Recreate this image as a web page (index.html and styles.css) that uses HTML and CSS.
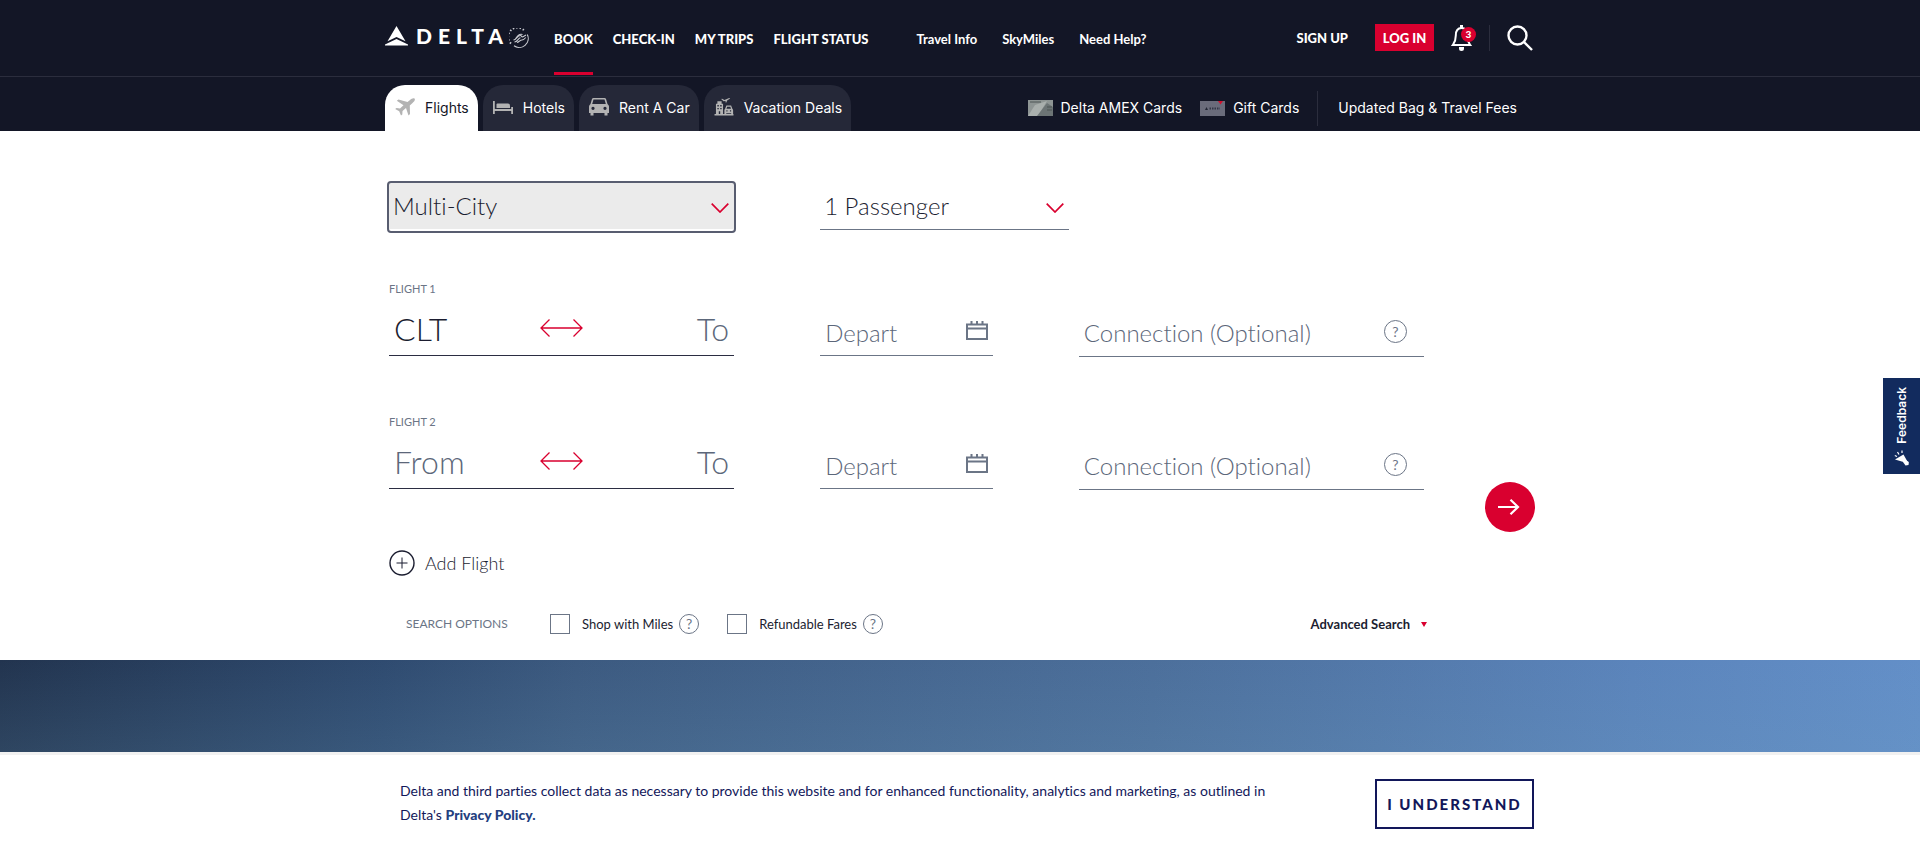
FILE: index.html
```html
<!DOCTYPE html>
<html lang="en">
<head>
<meta charset="utf-8">
<meta name="viewport" content="width=device-width, initial-scale=1">
<title>Delta Air Lines</title>
<link rel="stylesheet" href="styles.css">
</head>
<body>
<svg class="sprite" aria-hidden="true">
  <symbol id="i-swap" viewBox="0 0 43 18"><path d="M1 9H42M9.500 .5 1 9l8.500 8.500M33.500 .5 42 9l-8.500 8.500" fill="none" stroke="currentColor" stroke-width="1.300"/></symbol>
  <symbol id="i-cal" viewBox="0 0 22 19"><path d="M1 3.500H21V18H1ZM1 7.500H21" fill="none" stroke="currentColor" stroke-width="2"/><path d="M5.500 0V4M11 0V4M16.500 0V4" fill="none" stroke="currentColor" stroke-width="2"/></symbol>
  <symbol id="i-chev" viewBox="0 0 18 10"><path d="M.7 .7 9 9 17.300 .7" fill="none" stroke="currentColor" stroke-width="1.700"/></symbol>
</svg>
<header class="header">
  <div class="wrap topbar">
    <a class="logo" href="#" aria-label="Delta home">
      <svg class="logo-mark" viewBox="0 0 23 20" fill="#fff"><path d="M11.500 0 20.500 15.300 11.500 11 2.500 15.300Z"/><path d="M11.500 13 23 18.600V19.500H0V18.600Z"/></svg>
      <span class="logo-word">DELTA</span>
      <svg class="skyteam" viewBox="0 0 20 20" fill="none" stroke="#c9cad0"><path d="M18.300 6.500A9 9 0 0 1 5 17.800" stroke-width="1.100"/><path d="M2 15.500A9 9 0 0 1 15 2.300" stroke-width="1.800" stroke-dasharray="1.500 1.900"/><path d="M4.500 12c3-.2 3.500-4.500 7-4.500 1.500 0 .5 2 2.500 1.300L17 7M5.500 14c3.500-.3 3.500-4.200 6-4.200M8 14.500c2-.5 3-2.500 5-2.500 1.500 0 2.500-1 3.800-2.500M6.500 11c2-3 3.500-5.500 7-4.500" stroke-width="1.100"/></svg>
    </a>
    <nav class="nav-main" aria-label="Main">
      <a class="active" href="#">BOOK</a><a href="#">CHECK-IN</a><a href="#">MY TRIPS</a><a href="#">FLIGHT STATUS</a>
    </nav>
    <nav class="nav-sub" aria-label="Secondary">
      <a href="#">Travel Info</a><a href="#">SkyMiles</a><a href="#">Need Help?</a>
    </nav>
    <div class="account">
      <a class="signup" href="#">SIGN UP</a>
      <button class="login" type="button">LOG IN</button>
      <button class="bell" type="button" aria-label="Notifications">
        <svg viewBox="0 0 21 26" fill="none" stroke="#fff" stroke-width="2"><path d="M10.500 3C6 3 4.800 6.500 4.800 10.500c0 5.500-1.300 7-3 9.500h17.400c-1.700-2.500-3-4-3-9.500C16.200 6.500 15 3 10.500 3Z"/><path d="M10.500 0V3" stroke-width="3"/><path d="M8 22h5v1.500a2.500 2.500 0 0 1-5 0Z" fill="#fff" stroke="none"/></svg>
        <span class="badge">3</span>
      </button>
      <button class="search" type="button" aria-label="Search">
        <svg viewBox="0 0 26 26" fill="none" stroke="#fff" stroke-width="2.400"><circle cx="10.500" cy="10.500" r="9"/><path d="M17 17 25 25"/></svg>
      </button>
    </div>
  </div>
  <div class="subbar">
    <div class="wrap subbar-in">
      <nav class="tabs" aria-label="Booking">
        <a class="tab tab-on" href="#"><svg viewBox="0 0 20 18"><path d="M19.500 .6C18.500-.2 16.500 .6 15 2L12.500 4 3.500 1.500 1.800 2.700 8.500 7.300 5 10.500 1.500 10 .2 11 4.200 13.200 6 17.500 7.300 16.500 7.500 13 11 10 13.500 17.500 15 16 14.800 7.500 17.500 5C19.500 3.500 20.500 1.500 19.500 .6Z"/></svg>Flights</a>
        <a class="tab" href="#"><svg viewBox="0 0 20 18"><path d="M0 3H1.800V11H18.200V9H20V16H18.200V13H1.800V16H0Z"/><path d="M3.500 10V6.500Q3.500 5.500 4.500 5.500H15Q17 5.500 17 7.500V10Z"/></svg>Hotels</a>
        <a class="tab" href="#"><svg viewBox="0 0 20 18"><path fill-rule="evenodd" d="M4.500 0H15.500Q16.700 0 17.100 1.200L18.500 6Q20 7 20 8.500V15H18.500V17.500H15.500V15H4.500V17.500H1.500V15H0V8.500Q0 7 1.500 6L2.900 1.200Q3.300 0 4.500 0ZM4.500 1.500 3.200 6H16.800L15.500 1.500ZM4 8.800a1.600 1.600 0 1 0 .01 0ZM16 8.800a1.600 1.600 0 1 0 .01 0Z"/></svg>Rent A Car</a>
        <a class="tab" href="#"><svg viewBox="0 0 20 19"><path fill-rule="evenodd" d="M0 17H1.500V6H3V3.500H7.500V6H9V17H20V18.500H0ZM3 7.500V9H4.500V7.500ZM6 7.500V9H7.500V7.500ZM3 10.500V12H4.500V10.500ZM6 10.500V12H7.500V10.500ZM4.500 14V17H6V14Z"/><path fill-rule="evenodd" d="M12.500 8H17.500L18.800 11.300Q19.600 12 19.600 13V17H17.600V16H12.400V17H10.400V13Q10.400 12 11.200 11.300ZM13.300 9.200 12.600 11.300H17.400L16.700 9.200ZM12.500 13V14.200H13.700V13ZM16.300 13V14.200H17.500V13Z"/><path d="M7 1 8 .7 10.500 2 15.500 0 16.500 .6 13.300 2.600 12.500 4.800 11.700 4.800 11.600 3.200 9.500 3.400Z"/></svg>Vacation Deals</a>
      </nav>
      <nav class="promos" aria-label="Offers">
        <a href="#"><svg viewBox="0 0 25 16"><rect width="25" height="16" fill="#8e9594"/><path d="M0 16 7 5 19 1 10 16Z" fill="#a9afad"/><path d="M9 16 19 3 25 7V16Z" fill="#6c7475"/><path d="M2 2H13M19 7H24M19 10H24" stroke="#4d5455"/></svg>Delta AMEX Cards</a>
        <a href="#"><svg viewBox="0 0 25 16"><rect width="25" height="15" y="1" fill="#6a6c7b"/><path d="M18 1H23L20.500 4.500Z" fill="#d0112f"/><path d="M5 10 6.500 7 8 10Z" fill="#222635"/><path d="M9.500 8.500H20" stroke="#333747" stroke-width="2" stroke-dasharray="1.500 1"/></svg>Gift Cards</a>
        <a class="fees" href="#">Updated Bag &amp; Travel Fees</a>
      </nav>
    </div>
  </div>
</header>
<main>
  <form class="wrap booking">
    <div class="trip">
      <div class="pick pick-trip"><select aria-label="Trip type"><option>Multi-City</option><option>Round Trip</option><option>One Way</option></select><svg><use href="#i-chev"/></svg></div>
      <div class="pick pick-pax"><select aria-label="Passengers"><option>1 Passenger</option><option>2 Passengers</option></select><svg><use href="#i-chev"/></svg></div>
    </div>
    <fieldset class="leg">
      <legend>FLIGHT 1</legend>
      <div class="fields">
        <div class="field route"><input aria-label="From" placeholder="From" value="CLT"><button type="button" aria-label="Swap"><svg><use href="#i-swap"/></svg></button><input class="to" aria-label="To" placeholder="To"></div>
        <div class="field date"><input aria-label="Depart" placeholder="Depart"><svg><use href="#i-cal"/></svg></div>
        <div class="field conn"><input aria-label="Connection (Optional)" placeholder="Connection (Optional)"><button class="help" type="button" aria-label="Connection help">?</button></div>
      </div>
    </fieldset>
    <fieldset class="leg">
      <legend>FLIGHT 2</legend>
      <div class="fields">
        <div class="field route"><input aria-label="From" placeholder="From"><button type="button" aria-label="Swap"><svg><use href="#i-swap"/></svg></button><input class="to" aria-label="To" placeholder="To"></div>
        <div class="field date"><input aria-label="Depart" placeholder="Depart"><svg><use href="#i-cal"/></svg></div>
        <div class="field conn"><input aria-label="Connection (Optional)" placeholder="Connection (Optional)"><button class="help" type="button" aria-label="Connection help">?</button></div>
      </div>
    </fieldset>
    <button class="go" type="submit" aria-label="Search flights"><svg viewBox="0 0 22 16" fill="none" stroke="#fff" stroke-width="2.200"><path d="M0 8H20.500M12.500 .8 20 8l-7.500 7.200"/></svg></button>
    <button class="add" type="button"><svg viewBox="0 0 26 26" fill="none" stroke="#1b1d30"><circle cx="13" cy="13" r="12" stroke-width="1.400"/><path d="M7.500 13h11M13 7.500v11"/></svg>Add Flight</button>
    <div class="options">
      <span class="options-title">SEARCH OPTIONS</span>
      <div class="opt"><label><input type="checkbox">Shop with Miles</label><button class="help help-s" type="button" aria-label="Miles help">?</button></div>
      <div class="opt"><label><input type="checkbox">Refundable Fares</label><button class="help help-s" type="button" aria-label="Refundable help">?</button></div>
      <a class="advanced" href="#">Advanced Search<svg viewBox="0 0 6 5"><path d="M0 0H6L3 5Z" fill="#d9002f"/></svg></a>
    </div>
  </form>
  <div class="sky"></div>
</main>
<section class="cookie" aria-label="Cookie notice">
  <div class="wrap cookie-in">
    <p>Delta and third parties collect data as necessary to provide this website and for enhanced functionality, analytics and marketing, as outlined in Delta's <a href="#">Privacy Policy.</a></p>
    <button type="button">I UNDERSTAND</button>
  </div>
</section>
<button class="feedback" type="button"><span>Feedback</span><svg viewBox="0 0 16 16" fill="#fff"><path d="M1 9.500 9.500 4.500 14.500 13.500Z"/><path d="M10 9 14.800 12 14.500 15 11.500 15.500 9 12Z"/><path d="M.8 5.500 3 6.500M3.500 2 5 4.500M8 .5V3" stroke="#fff" stroke-width="1.200"/></svg></button>
</body>
</html>
```
FILE: styles.css
```css
* { box-sizing: border-box; }
body { margin: 0; min-height: 100vh; display: flex; flex-direction: column; background: #fff; color: #1b1d30; font-family: "Lato", "Open Sans", sans-serif; font-variant-ligatures: none; }
a { color: inherit; text-decoration: none; }
button, input, select { font: inherit; font-variant-ligatures: none; color: inherit; margin: 0; padding: 0; border: 0; background: none; border-radius: 0; }
svg { display: block; flex: none; }
.sprite { position: absolute; width: 0; height: 0; }
.wrap { width: 100%; max-width: 1150px; margin: 0 auto; }

.header { background: #131626; color: #fff; }
.topbar { display: flex; height: 76px; }
.logo { display: flex; align-items: center; width: 169px; padding-bottom: 4px; }
.logo-mark { width: 23px; height: 20px; }
.logo-word { margin-left: 8px; font-weight: 900; font-size: 21px; line-height: 24px; letter-spacing: 6px; }
.skyteam { width: 20px; height: 20px; margin-top: 4px; }
.nav-main, .nav-sub { display: flex; gap: 20px; font-weight: 900; font-size: 13px; line-height: 20px; white-space: nowrap; }
.nav-main a, .nav-sub a { padding-top: 29px; }
.nav-main .active { border-bottom: 3px solid #d9002f; height: 75px; }
.nav-sub { gap: 25px; margin-left: 48px; font-weight: 700; }
.account { display: flex; align-items: center; margin-left: auto; padding-right: 2px; height: 76px; padding-bottom: 1px; font-weight: 900; font-size: 13px; line-height: 20px; }
.login { width: 59px; height: 27px; margin-left: 27px; background: #d9002f; }
.bell { position: relative; margin-left: 17px; }
.bell svg { width: 21px; height: 26px; }
.badge { position: absolute; left: 10px; top: 2px; width: 15px; height: 15px; border-radius: 8px; background: #d9002f; font-size: 10px; line-height: 15px; }
.search { margin-left: 17px; padding-left: 17px; border-left: 1px solid #2b2d3d; }
.search svg { width: 26px; height: 26px; }

.subbar { border-top: 1px solid #2b2d3d; font: 400 14px/18px "Inter", sans-serif; }
.subbar-in { display: flex; height: 54px; align-items: flex-end; }
.tabs { display: flex; gap: 5px; }
.tab { display: flex; align-items: center; gap: 10px; height: 46px; padding: 0 9px 0 10px; border-radius: 20px 20px 0 0; background: #252838; white-space: nowrap; }
.tab svg { width: 20px; height: 18px; fill: #b3b3b3; margin-bottom: 2px; }
.tab-on { background: #fff; color: #131626; }
.promos { display: flex; align-items: center; gap: 18px; margin-left: auto; padding-right: 18px; height: 46px; white-space: nowrap; }
.promos a { display: flex; align-items: center; gap: 8px; }
.promos svg { width: 25px; height: 16px; }
.promos .fees { height: 35px; padding-left: 20px; border-left: 1px solid #2b2d3d; }

.booking { display: grid; grid-template-columns: minmax(0, 1fr) 50px; column-gap: 61px; padding: 50px 0 24px 4px; }
.trip, .leg, .add, .options { grid-column: 1; }
.trip, .fields { display: grid; grid-template-columns: minmax(0, 2fr) minmax(0, 1fr) minmax(0, 2fr); column-gap: 86px; }
.trip { height: 100px; padding-top: 2px; font-size: 24px; line-height: 30px; align-items: start; }
.pick { position: relative; border-bottom: 1px solid #6b7586; }
.pick select { display: block; width: 100%; height: 46px; padding: 0 4px; appearance: none; font-weight: 300; }
.pick svg { position: absolute; right: 5px; top: 20px; width: 18px; height: 10px; color: #d9002f; pointer-events: none; }
.pick-trip { background: #ebebeb; border-bottom: 2px solid #fff; border-radius: 2px; outline: 2px solid #585d70; }
.pick-pax { width: 249px; }
.leg { margin: 0; padding: 0 0 58px; border: 0; min-width: 0; height: 133px; }
.leg legend { padding: 0; font-size: 11px; line-height: 16px; color: #6b7586; }
.fields { align-items: start; }
.field { display: flex; align-items: center; height: 59px; border-bottom: 1px solid #6b7586; font-size: 24px; line-height: 30px; }
.field input { flex: 1; width: 0; min-width: 0; height: 40px; padding-left: 5px; outline: 0; font-weight: 300; }
.field input::placeholder { color: #5c677a; opacity: 1; }
.route { border-color: #2b2d42; font-size: 32px; padding-top: 4px; }
.route svg { width: 43px; height: 18px; color: #d9002f; }
.field .to { text-align: right; padding: 0 5px 0 0; }
.date { padding: 12px 5px 0 0; }
.date svg { width: 22px; height: 19px; color: #6b7586; margin-bottom: 4px; }
.conn { height: 60px; padding: 12px 17px 0 0; }
.help { width: 23px; height: 23px; border: 1px solid #6b7586; border-radius: 50%; color: #6b7586; font-size: 14px; line-height: 21px; text-align: center; }
.conn .help { margin-bottom: 2px; }
.go { grid-column: 2; grid-row: 3; align-self: end; width: 50px; height: 50px; margin-bottom: 15px; border-radius: 50%; background: #d9002f; display: flex; align-items: center; justify-content: center; }
.go svg { width: 22px; height: 16px; margin-right: 2px; }
.add { display: flex; align-items: center; gap: 10px; height: 26px; margin-top: 3px; font-weight: 300; font-size: 18px; line-height: 26px; justify-self: start; }
.add svg { width: 26px; height: 26px; }
.options { display: flex; align-items: center; margin-top: 36px; padding-left: 17px; height: 24px; font-size: 13px; line-height: 20px; white-space: nowrap; }
.options-title { width: 144px; font-size: 12px; color: #6b7586; }
.opt { display: flex; align-items: center; gap: 6px; margin-right: 28px; }
.opt label { display: flex; align-items: center; gap: 12px; }
.opt input { appearance: none; width: 20px; height: 20px; border: 1px solid #6b7586; }
.help-s { width: 20px; height: 20px; line-height: 18px; }
.advanced { display: flex; align-items: center; gap: 11px; margin-left: auto; margin-right: -3px; font-weight: 700; }
.advanced svg { width: 6px; height: 5px; }
.sky { height: 92px; background: linear-gradient(to bottom, rgba(70, 120, 160, 0), rgba(110, 160, 190, .16)), linear-gradient(to right, #22344f 0%, #2f4b70 20%, #3c5a80 30%, #4c6f9b 60%, #5b84bb 85%, #638fc8 100%); }

.cookie { flex: 1; border-top: 3px solid #f1f1f1; color: #12175a; }
.cookie-in { display: flex; align-items: flex-start; justify-content: space-between; padding: 24px 1px 20px 15px; }
.cookie p { max-width: 890px; margin: 0; font-size: 14px; line-height: 24px; }
.cookie a { font-weight: 900; color: #24407f; }
.cookie button { width: 159px; height: 50px; border: 2px solid #12175a; font-weight: 900; font-size: 15px; line-height: 20px; letter-spacing: 2px; }
.feedback { position: fixed; right: 0; top: 378px; width: 37px; height: 96px; display: flex; flex-direction: column; align-items: center; justify-content: space-between; padding: 9px 0 8px; background: #122b5e; color: #fff; font: 600 12px/16px "Inter", sans-serif; }
.feedback span { writing-mode: sideways-lr; }
.feedback svg { width: 16px; height: 16px; }
```
